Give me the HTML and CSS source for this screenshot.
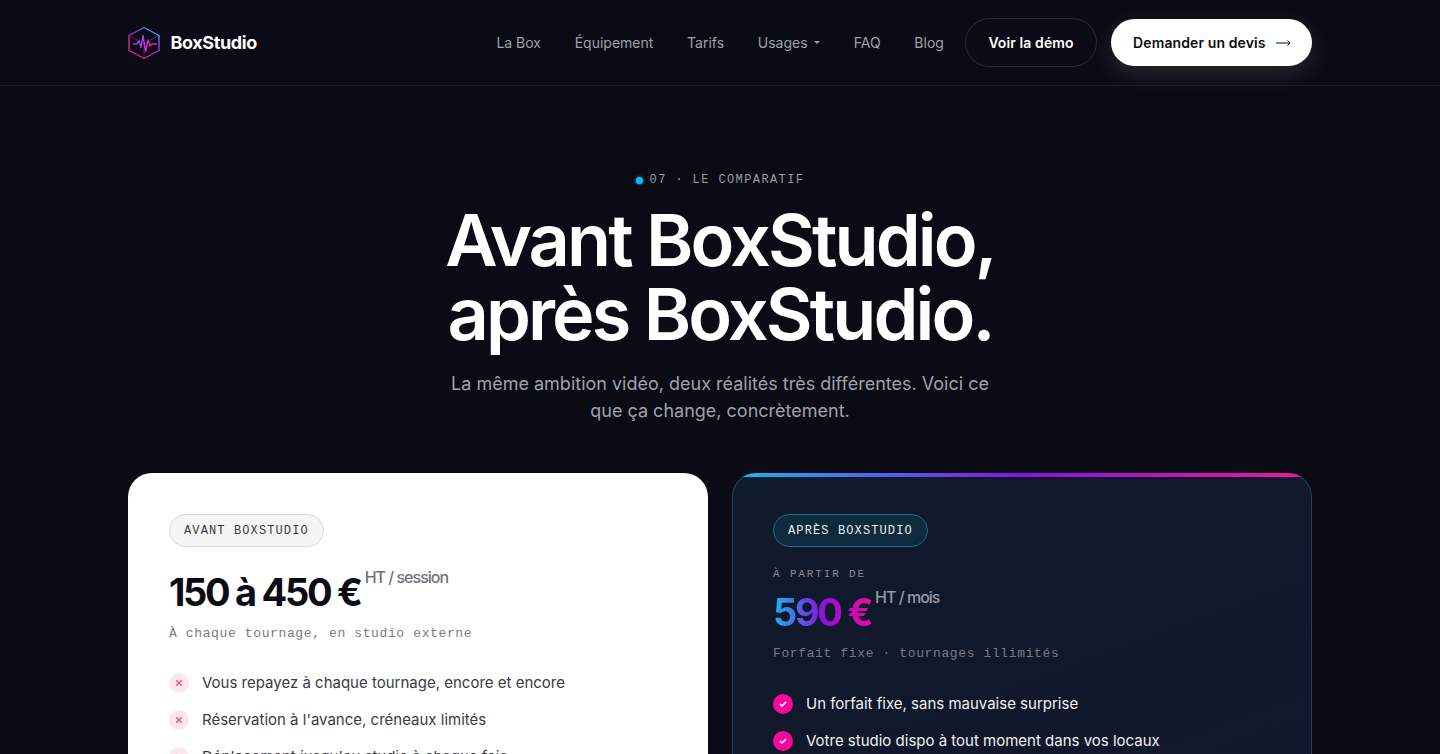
FILE: index.html
```html
<!DOCTYPE html>
<html lang="fr">
<head>
    <meta charset="UTF-8">
    <meta name="viewport" content="width=device-width, initial-scale=1.0">
    <title>BoxStudio</title>
    <link rel="stylesheet" href="styles.css">
</head>
<body>
    <header class="navbar">
        <div class="navbar-inner">
            <a href="#" class="logo">
                <svg width="34" height="34" viewBox="0 0 34 34" fill="none">
                    <defs>
                        <linearGradient id="logo-grad" x1="27" y1="3" x2="9" y2="26" gradientUnits="userSpaceOnUse">
                            <stop offset="0" stop-color="#22b8e6"/>
                            <stop offset="0.45" stop-color="#9a30e0"/>
                            <stop offset="1" stop-color="#f01a9c"/>
                        </linearGradient>
                        <linearGradient id="wave-grad" x1="6" y1="0" x2="29" y2="0" gradientUnits="userSpaceOnUse">
                            <stop offset="0" stop-color="#6d4be6"/>
                            <stop offset="0.5" stop-color="#c03ae0"/>
                            <stop offset="1" stop-color="#f01a9c"/>
                        </linearGradient>
                    </defs>
                    <path d="M17 1.5 L32 9.5 V24.5 L17 32.5 L2 24.5 V9.5 Z" stroke="url(#logo-grad)" stroke-width="1.4" stroke-linejoin="round"/>
                    <path d="M2 9.5 L17 17.5 L32 9.5 M17 17.5 V32.5" stroke="url(#logo-grad)" stroke-width="0.9" opacity="0.55"/>
                    <path d="M6.5 18 H10 L12 14.5 L14 21.5 L16 9.5 L18.5 25.5 L21 14 L23 20 L25 18 H29.5" stroke="url(#wave-grad)" stroke-width="1.4" stroke-linejoin="round" stroke-linecap="round"/>
                </svg>
                <span>BoxStudio</span>
            </a>
            <nav class="nav-links">
                <a href="#">La Box</a>
                <a href="#">Équipement</a>
                <a href="#">Tarifs</a>
                <a href="#" class="has-caret">Usages <i class="caret"></i></a>
                <a href="#">FAQ</a>
                <a href="#">Blog</a>
            </nav>
            <a href="#" class="btn btn-ghost">Voir la démo</a>
            <a href="#" class="btn btn-white">Demander un devis
                <svg width="15" height="8" viewBox="0 0 15 8" fill="none" stroke="#0a0b14" stroke-width="1"><path d="M0 4 H14 M11.5 1.5 L14 4 L11.5 6.5"/></svg>
            </a>
        </div>
    </header>

    <main class="section">
        <div class="eyebrow"><span class="dot"></span>07 · LE COMPARATIF</div>
        <h1>Avant BoxStudio,<br>après BoxStudio.</h1>
        <p class="lead">La même ambition vidéo, deux réalités très différentes. Voici ce que ça change, concrètement.</p>

        <div class="compare">
            <article class="card card-before">
                <span class="pill">AVANT BOXSTUDIO</span>
                <div class="price">150 à 450 €<sup>HT / session</sup></div>
                <p class="price-note">À chaque tournage, en studio externe</p>
                <ul class="list">
                    <li><span class="mark mark-no"><svg width="8" height="8" viewBox="0 0 8 8"><path d="M1.2 1.2 L6.8 6.8 M6.8 1.2 L1.2 6.8"/></svg></span>Vous repayez à chaque tournage, encore et encore</li>
                    <li><span class="mark mark-no"><svg width="8" height="8" viewBox="0 0 8 8"><path d="M1.2 1.2 L6.8 6.8 M6.8 1.2 L1.2 6.8"/></svg></span>Réservation à l'avance, créneaux limités</li>
                    <li><span class="mark mark-no"><svg width="8" height="8" viewBox="0 0 8 8"><path d="M1.2 1.2 L6.8 6.8 M6.8 1.2 L1.2 6.8"/></svg></span>Déplacement jusqu'au studio à chaque fois</li>
                </ul>
            </article>

            <article class="card card-after">
                <span class="pill">APRÈS BOXSTUDIO</span>
                <div class="from">À PARTIR DE</div>
                <div class="price price-small"><span class="grad">590 €</span><sup>HT / mois</sup></div>
                <p class="price-note">Forfait fixe · tournages illimités</p>
                <ul class="list">
                    <li><span class="mark mark-yes"><svg width="10" height="8" viewBox="0 0 10 8"><path d="M2 4.2 L4 6 L8 2"/></svg></span>Un forfait fixe, sans mauvaise surprise</li>
                    <li><span class="mark mark-yes"><svg width="10" height="8" viewBox="0 0 10 8"><path d="M2 4.2 L4 6 L8 2"/></svg></span>Votre studio dispo à tout moment dans vos locaux</li>
                </ul>
            </article>
        </div>
    </main>
</body>
</html>
```

FILE: styles.css
```css
html, body {
    margin: 0;
    padding: 0;
    background-color: #0a0b14;
    color: white;
    font-family: Inter, "Liberation Sans", sans-serif;
    height: 754px;
    overflow: hidden;
}
a {
    text-decoration: none;
    color: inherit;
}
.navbar {
    height: 85px;
    border-bottom: 1px solid #181923;
}
.navbar-inner {
    width: 1184px;
    height: 85px;
    margin: 0 auto;
    display: flex;
    align-items: center;
}
.logo {
    display: flex;
    align-items: center;
    gap: 9.5px;
    font-weight: 700;
    font-size: 18px;
    letter-spacing: -0.4px;
    margin-left: -1px;
}
.nav-links {
    margin-left: auto;
    display: flex;
    align-items: center;
    gap: 33.7px;
    font-size: 14px;
    color: #a1a1ad;
}
.has-caret {
    display: flex;
    align-items: center;
    gap: 6.5px;
}
.caret {
    width: 0;
    height: 0;
    border-left: 3px solid transparent;
    border-right: 3px solid transparent;
    border-top: 3px solid #a1a1ad;
}
.btn {
    display: flex;
    align-items: center;
    border-radius: 999px;
    font-size: 14px;
    font-weight: 600;
    letter-spacing: 0.1px;
    box-sizing: border-box;
}
.btn-ghost {
    height: 49px;
    padding: 0 22.5px;
    margin-left: 21px;
    border: 1px solid #2a2b35;
}
.btn-white {
    height: 47px;
    padding: 0 21.5px 0 22px;
    margin-left: 14px;
    gap: 10px;
    background-color: white;
    color: #0a0b14;
    box-shadow: 0 8px 24px rgba(255,255,255,0.12);
}
.section {
    text-align: center;
    padding-top: 87px;
}
.eyebrow {
    display: flex;
    justify-content: center;
    align-items: center;
    gap: 7px;
    height: 14px;
    font-family: "Liberation Mono", monospace;
    font-size: 12px;
    letter-spacing: 1.4px;
    color: #9a9aa6;
}
.dot {
    width: 7px;
    height: 7px;
    border-radius: 50%;
    background-color: #16b8f3;
    box-shadow: 0 0 3px #16b8f3;
}
h1 {
    margin: 16px 0 0;
    font-size: 72px;
    line-height: 74px;
    font-weight: 600;
    letter-spacing: -2.88px;
}
.lead {
    width: 560px;
    margin: 19.2px auto 0;
    font-size: 18px;
    line-height: 27px;
    color: #a1a1ad;
}
.compare {
    width: 1184px;
    margin: 49px auto 0;
    display: grid;
    grid-template-columns: 580px 580px;
    gap: 24px;
    text-align: left;
}
.card {
    box-sizing: border-box;
    height: 600px;
    padding: 41px;
    border-radius: 24px;
    position: relative;
    overflow: hidden;
}
.card-before {
    background-color: white;
    color: #0a0b14;
}
.card-after {
    background: linear-gradient(160deg, #0f1a2b 0%, #14142a 100%);
    box-shadow: inset 0 0 0 1px #1a4a5e;
}
.card-after::before {
    content: "";
    position: absolute;
    top: 0;
    left: 0;
    right: 0;
    height: 4px;
    background: linear-gradient(90deg, #16b8f3, #8a12e0 50%, #f0189c);
}
.pill {
    display: inline-block;
    box-sizing: border-box;
    height: 33px;
    line-height: 32px;
    padding: 0 14px;
    border-radius: 999px;
    font-family: "Liberation Mono", monospace;
    font-size: 12px;
    letter-spacing: 1.12px;
}
.card-before .pill {
    background-color: #f5f5f5;
    border: 1px solid #d8d8da;
    color: #3a3a44;
}
.card-after .pill {
    background-color: #0e2a3c;
    border: 1px solid #1a6f8c;
    color: #e4eef4;
}
.price {
    margin-top: 22px;
    font-size: 38px;
    line-height: 46px;
    font-weight: 700;
    letter-spacing: -2.3px;
}
.price sup {
    font-size: 16px;
    font-weight: 500;
    letter-spacing: -1px;
    color: #71717d;
    margin-left: 4px;
    vertical-align: 23px;
    line-height: 0;
}
.card-after .price sup {
    color: #9a9aa6;
}
.from {
    margin-top: 20px;
    font-family: "Liberation Mono", monospace;
    font-size: 11px;
    letter-spacing: 1.85px;
    color: #8a8a96;
    line-height: 14px;
}
.price-small {
    margin-top: 8px;
}
.grad {
    background: linear-gradient(90deg, #16b8f3, #8a12e0 50%, #f0089c);
    -webkit-background-clip: text;
    background-clip: text;
    color: transparent;
}
.price-note {
    margin: 10px 0 0;
    font-family: "Liberation Mono", monospace;
    font-size: 13px;
    line-height: 18px;
    letter-spacing: 0.62px;
    color: #7a7a86;
}
.list {
    list-style: none;
    margin: 22px 0 0;
    padding: 0;
    font-size: 15px;
}
.card-before .list {
    margin-top: 21px;
}
.list li {
    display: flex;
    align-items: center;
    gap: 13px;
    height: 37px;
    color: #3a3a44;
}
.card-after .list li {
    color: #f0f0f4;
}
.mark {
    flex: none;
    width: 20px;
    height: 20px;
    border-radius: 50%;
    display: flex;
    align-items: center;
    justify-content: center;
}
.mark svg {
    fill: none;
    stroke-width: 1.4;
}
.mark-no {
    background-color: #fde7ef;
}
.mark-no svg {
    stroke: #ef4f80;
}
.mark-yes {
    background-color: #f5089c;
}
.mark-yes svg {
    stroke: white;
    stroke-width: 1.6;
}
```
